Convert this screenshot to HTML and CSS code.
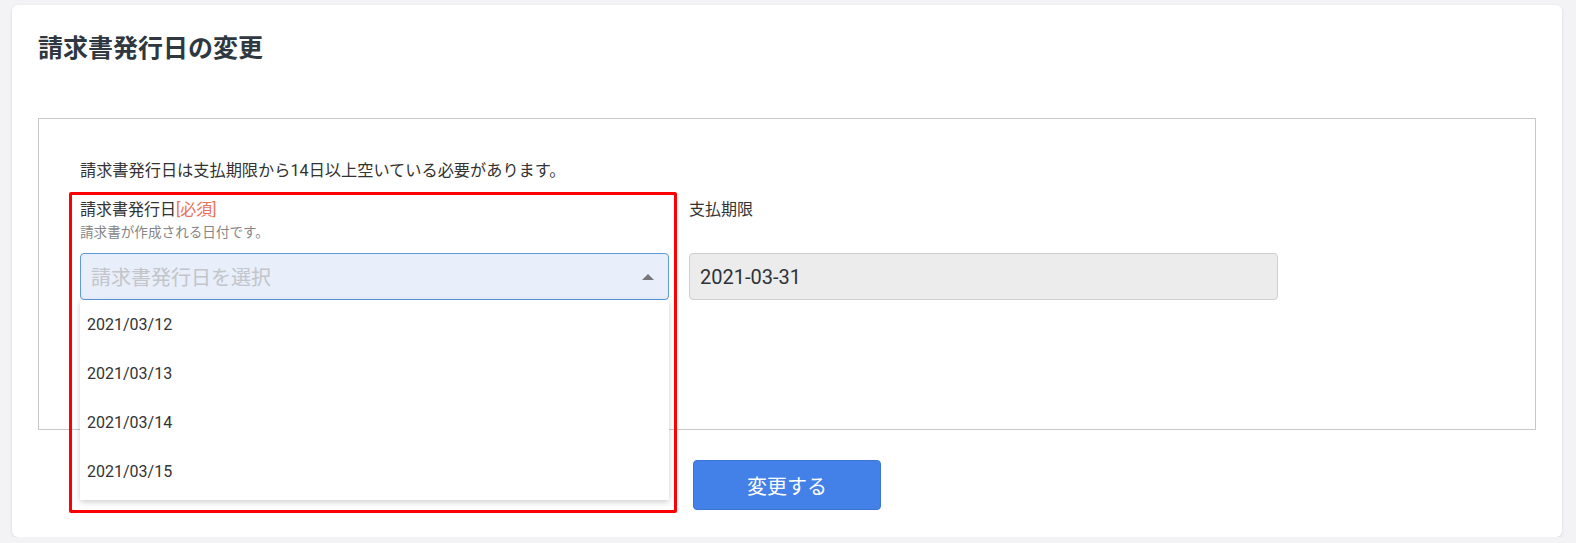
FILE: index.html
```html
<!DOCTYPE html>
<html lang="ja">
<head>
  <meta charset="UTF-8" />
  <meta name="viewport" content="width=device-width, initial-scale=1" />
  <title>請求書発行日の変更</title>
  <link rel="stylesheet" href="styles.css">
</head>
<body>

<main class="card">
  <h1>請求書発行日の変更</h1>

  <section class="form-box">
    <p class="note">請求書発行日は支払期限から14日以上空いている必要があります。</p>

    <div class="fields">
      <div class="field">
        <div class="highlight"></div>
        <div class="label">請求書発行日<span class="required">[必須]</span></div>
        <div class="help">請求書が作成される日付です。</div>
        <div class="select open">
          <span class="placeholder">請求書発行日を選択</span>
          <span class="caret"></span>
        </div>
        <ul class="options">
          <li>2021/03/12</li>
          <li>2021/03/13</li>
          <li>2021/03/14</li>
          <li>2021/03/15</li>
        </ul>
      </div>

      <div class="field">
        <div class="label">支払期限</div>
        <div class="help"></div>
        <div class="input readonly">2021-03-31</div>
      </div>
    </div>
  </section>

  <button class="submit" type="button">変更する</button>
</main>

</body>
</html>
```

FILE: styles.css
```css
html {
  overflow: hidden;
}
body {
  font-family: Roboto, "Noto Sans CJK JP", sans-serif;
  margin: 0;
  padding: 5px 14px 0 12px;
  background: #f3f3f5;
  color: #333;
}
.card {
  background: white;
  border-radius: 6px;
  box-shadow: 0 1px 3px rgba(0, 0, 0, 0.12);
  padding: 26px 26px 27px 26px;
}
h1 {
  font-size: 25px;
  font-weight: 700;
  line-height: 35px;
  height: 35px;
  margin: 0 0 52px;
  color: #2f3841;
}
.form-box {
  border: 1px solid #c9c9c9;
  padding: 40px 0 129px 41px;
}
.note {
  font-size: 16.2px;
  line-height: 24px;
  height: 24px;
  margin: 0 0 15px;
  color: #333;
}
.fields {
  display: grid;
  grid-template-columns: 589px 589px;
  column-gap: 20px;
}
.field {
  position: relative;
}
.label {
  font-size: 16px;
  line-height: 24px;
  height: 24px;
  color: #333;
}
.required {
  color: #e9735d;
}
.help {
  font-size: 13.6px;
  line-height: 18px;
  height: 18px;
  margin-top: 1px;
  color: #858585;
}
.select, .input {
  box-sizing: border-box;
  height: 47px;
  margin-top: 12px;
  border-radius: 4px;
  display: flex;
  align-items: center;
  padding: 0 14px 0 10px;
  font-size: 20px;
}
.select {
  background: #e8eefa;
  border: 1px solid #5b9bde;
  justify-content: space-between;
}
.placeholder {
  color: #c2c5c9;
}
.caret {
  width: 0;
  height: 0;
  border-left: 6px solid transparent;
  border-right: 6px solid transparent;
  border-bottom: 6px solid #777;
}
.readonly {
  background: #ececec;
  border: 1px solid #cfcfcf;
  color: #2e3338;
}
.options {
  position: absolute;
  left: 0;
  right: 0;
  top: 102px;
  margin: 0;
  padding: 0 0 4px;
  list-style: none;
  background: white;
  box-shadow: 0 2px 6px rgba(0, 0, 0, 0.2);
  z-index: 2;
}
.options li {
  height: 49px;
  line-height: 49px;
  padding-left: 7px;
  font-size: 16px;
  color: #333;
}
.highlight {
  position: absolute;
  top: -6px;
  left: -11px;
  width: 608px;
  height: 321px;
  box-sizing: border-box;
  border: 3px solid #ff0000;
  border-radius: 2px;
  pointer-events: none;
  z-index: 3;
}
.submit {
  display: block;
  width: 188px;
  height: 50px;
  margin: 30px auto 0;
  background: #4381e9;
  border: 1px solid #3a74d4;
  border-radius: 4px;
  color: white;
  font-family: inherit;
  font-size: 20px;
}
```
